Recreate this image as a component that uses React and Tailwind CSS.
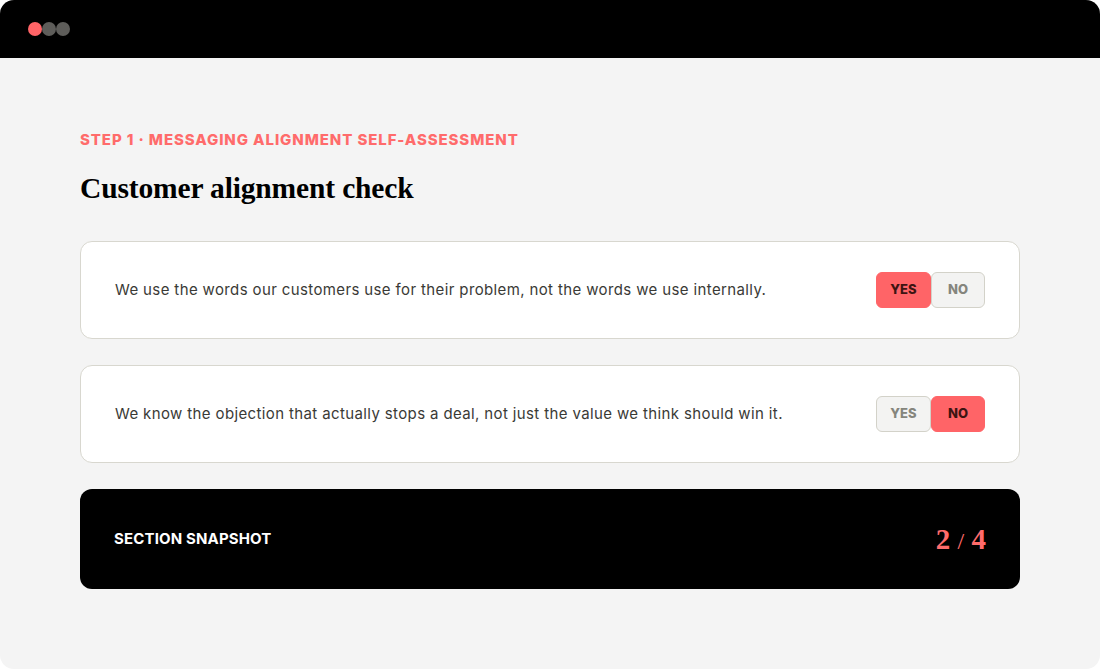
import React, { useState } from 'react';

const questions = [
  { id: 1, text: 'We use the words our customers use for their problem, not the words we use internally.', answer: 'yes' },
  { id: 2, text: 'We know the objection that actually stops a deal, not just the value we think should win it.', answer: 'no' },
];

const Toggle = ({ value, onChange }) => {
  const btn = (key, label, width) => {
    const active = value === key;
    return (
      <button
        onClick={() => onChange(key)}
        className={
          (active
            ? 'bg-[#ff6467] text-[#3d1412] border-[#ff6467]'
            : 'bg-[#f3f3f2] text-[#85857d] border-[#d3d2c9]') +
          ' h-9 rounded-md text-[13px] font-extrabold border ' +
          width
        }
      >
        {label}
      </button>
    );
  };
  return (
    <div className="flex items-center">
      {btn('yes', 'YES', 'w-[55px]')}
      {btn('no', 'NO', 'w-[54px]')}
    </div>
  );
};

const App = () => {
  const [answers, setAnswers] = useState(
    Object.fromEntries(questions.map((q) => [q.id, q.answer]))
  );

  return (
    <div className="w-[1100px] h-[669px] bg-white" style={{ fontFamily: 'Inter, "Noto Sans", sans-serif' }}>
      <div className="w-full h-full rounded-[14px] overflow-hidden bg-[#f4f4f4] flex flex-col">
        {/* window bar */}
        <div className="h-[58px] bg-black flex items-center pl-[28px]">
          <span className="w-[14px] h-[14px] rounded-full bg-[#ff6467]" />
          <span className="w-[14px] h-[14px] rounded-full bg-[#5e5d5a]" />
          <span className="w-[14px] h-[14px] rounded-full bg-[#5e5d5a]" />
        </div>

        <div className="px-[80px] pt-[72px]">
          <div className="text-[15px] font-extrabold tracking-[0.06em] text-[#ff6b6b] leading-5">
            STEP 1 · MESSAGING ALIGNMENT SELF-ASSESSMENT
          </div>
          <h1
            className="mt-[22px] text-[29.5px] font-bold text-black leading-8 tracking-[-0.005em]"
            style={{ fontFamily: '"Liberation Serif", serif' }}
          >
            Customer alignment check
          </h1>

          <div className="mt-[37px] flex flex-col gap-[26px]">
            {questions.map((q) => (
              <div
                key={q.id}
                className="h-[98px] bg-white border border-[#d8d7cf] rounded-xl flex items-center justify-between pl-[34px] pr-[34px]"
              >
                <p className="text-[15px] tracking-[0.025em] text-[#3a3a36]">{q.text}</p>
                <Toggle
                  value={answers[q.id]}
                  onChange={(v) => setAnswers({ ...answers, [q.id]: v })}
                />
              </div>
            ))}

            <div className="h-[100px] bg-black rounded-xl flex items-center justify-between pl-[34px] pr-[34px]">
              <span className="text-[15px] font-bold text-white tracking-[0.01em]">SECTION SNAPSHOT</span>
              <span
                className="text-[29px] font-bold text-[#ff6b6b] leading-none"
                style={{ fontFamily: '"Liberation Serif", serif' }}
              >
                2 <span className="font-normal text-[24px]">/</span> 4
              </span>
            </div>
          </div>
        </div>
      </div>
    </div>
  );
};

export default App;
